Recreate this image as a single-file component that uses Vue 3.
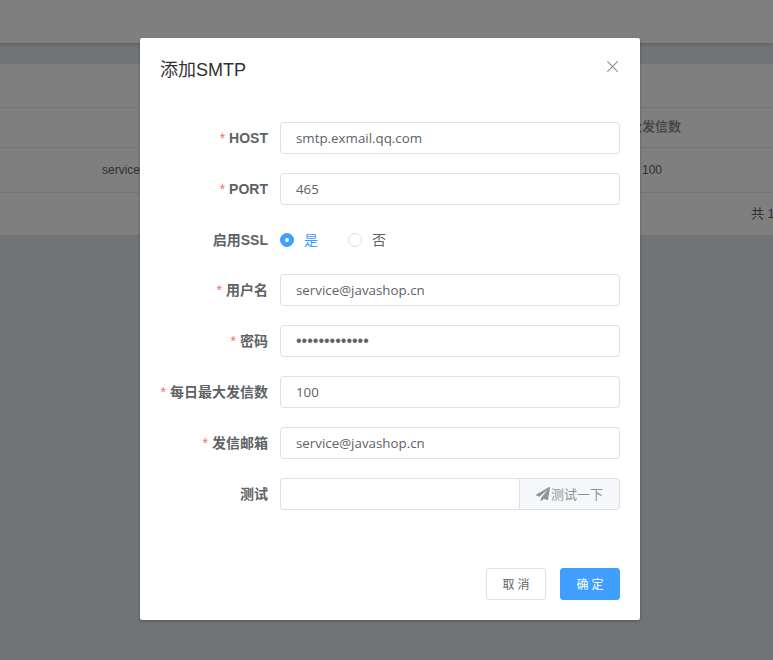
<script setup>
const fields = [
  { label: 'HOST', value: 'smtp.exmail.qq.com' },
  { label: 'PORT', value: '465' },
]
const fields2 = [
  { label: '用户名', value: 'service@javashop.cn', type: 'text' },
  { label: '密码', value: 'service123456', type: 'password' },
  { label: '每日最大发信数', value: '100', type: 'text' },
  { label: '发信邮箱', value: 'service@javashop.cn', type: 'text' },
]
</script>

<template>
  <div class="page">
    <header class="topbar"></header>
    <div class="band"></div>
    <section class="table">
      <div class="row blank"></div>
      <div class="row head">
        <div class="cell-left"></div>
        <div class="cell-right">每日最大发信数</div>
      </div>
      <div class="row data">
        <div class="cell-left">service@javashop.cn</div>
        <div class="cell-right num">100</div>
      </div>
      <div class="pager"><span>共 1 条</span></div>
    </section>

    <div class="overlay">
      <div class="dialog">
        <div class="dialog-head">
          <span class="title">添加SMTP</span>
          <svg class="close" viewBox="0 0 11 11" width="11" height="11">
            <path d="M.3.3l10.4 10.4M10.7.3L.3 10.7" stroke="#909399" stroke-width="1.2" fill="none" />
          </svg>
        </div>
        <form class="form" @submit.prevent>
          <div v-for="f in fields" :key="f.label" class="item">
            <label class="label"><i>*</i>{{ f.label }}</label>
            <input class="input" :value="f.value" />
          </div>
          <div class="item radio-item">
            <label class="label cjk">启用SSL</label>
            <div class="radios">
              <span class="radio on"><b class="dot"></b><span class="cjk">是</span></span>
              <span class="radio"><b class="dot"></b><span class="cjk">否</span></span>
            </div>
          </div>
          <div v-for="f in fields2" :key="f.label" class="item">
            <label class="label cjk"><i>*</i>{{ f.label }}</label>
            <input class="input" :class="{ secret: f.type === 'password' }" :type="f.type" :value="f.value" />
          </div>
          <div class="item">
            <label class="label cjk">测试</label>
            <div class="group">
              <input class="input joined" />
              <div class="append">
                <svg viewBox="0 0 512 512" width="14" height="14">
                  <path fill="#909399" d="M476 3.2 12.5 270.6c-18.1 10.4-15.8 35.6 2.2 43.2L121 358.4l287.3-253.2c5.5-4.9 13.3 2.6 8.6 8.3L176 407v80.5c0 23.6 28.5 32.9 42.5 15.8L282 426l124.6 52.2c14.2 6 30.4-2.9 33-18.2l72-432C515 7.8 493.3-6.8 476 3.2z" />
                </svg>
                <span class="cjk">测试一下</span>
              </div>
            </div>
          </div>
        </form>
        <div class="dialog-foot">
          <button class="btn" type="button">取 消</button>
          <button class="btn primary" type="button">确 定</button>
        </div>
      </div>
    </div>
  </div>
</template>

<style>
html, body { margin: 0; padding: 0; }
</style>

<style scoped>
.page {
  position: relative;
  width: 773px;
  height: 660px;
  overflow: hidden;
  background: #e2e8ed;
  font-family: "Liberation Sans", "Noto Sans CJK SC", sans-serif;
  font-size: 14px;
  color: #606266;
}
.topbar {
  height: 43px;
  background: #fff;
  box-shadow: 0 1px 4px rgba(0, 0, 0, .2);
  position: relative;
}
.band { height: 21px; }
.table {
  background: #fff;
  height: 171px;
  font-size: 12px;
}
.row {
  display: flex;
  align-items: center;
  box-sizing: border-box;
  border-bottom: 1px solid #ebeef5;
}
.blank { height: 44px; }
.head { height: 40px; padding-bottom: 4px; font-weight: 700; font-size: 13px; color: #909399; }
.data { height: 45px; color: #606266; }
.cell-left { width: 590px; padding-left: 102px; box-sizing: border-box; white-space: nowrap; }
.cell-right { white-space: nowrap; }
.num { margin-left: 52px; }
.pager {
  display: flex;
  align-items: center;
  height: 42px;
  padding-left: 751px;
  padding-bottom: 4px;
  box-sizing: border-box;
  white-space: nowrap;
  font-size: 13px;
  color: #606266;
}
.overlay {
  position: absolute;
  inset: 0;
  background: rgba(0, 0, 0, .5);
}
.dialog {
  width: 500px;
  height: 582px;
  margin: 38px 0 0 140px;
  background: #fff;
  border-radius: 2px;
  box-shadow: 0 1px 3px rgba(0, 0, 0, .3);
  box-sizing: border-box;
  display: flex;
  flex-direction: column;
}
.dialog-head {
  display: flex;
  justify-content: space-between;
  padding: 20px 22px 10px 20px;
  height: 54px;
  box-sizing: border-box;
}
.title { font-size: 18px; line-height: 24px; color: #303133; }
.close { margin-top: 3px; }
.form { padding: 30px 20px 0; flex: 1; }
.item { display: flex; height: 32px; margin-bottom: 19px; align-items: center; }
.radio-item { height: 31px; }
.label {
  width: 120px;
  box-sizing: border-box;
  padding-right: 12px;
  text-align: right;
  font-weight: 700;
  font-size: 14px;
  color: #606266;
  white-space: nowrap;
}
.label.cjk, span.cjk { padding-bottom: 2px; }
.label i { color: #f56c6c; font-style: normal; font-weight: 400; margin-right: 4px; }
.input {
  flex: 1;
  min-width: 0;
  height: 32px;
  box-sizing: border-box;
  border: 1px solid #dcdfe6;
  border-radius: 4px;
  padding: 0 15px;
  font-family: "Open Sans", sans-serif;
  font-size: 13.33px;
  color: #606266;
  outline: none;
  background: #fff;
}
.secret { font-family: "Liberation Sans", sans-serif; font-size: 16px; }
.radios { display: flex; }
.radio { display: flex; align-items: center; width: 68px; color: #606266; }
.radio .dot {
  width: 14px;
  height: 14px;
  margin-right: 10px;
  border: 1px solid #dcdfe6;
  border-radius: 50%;
  box-sizing: border-box;
  background: #fff;
}
.radio.on { color: #409eff; }
.radio.on .dot { background: #409eff; border-color: #409eff; position: relative; }
.radio.on .dot::after {
  content: "";
  position: absolute;
  left: 4px;
  top: 4px;
  width: 4px;
  height: 4px;
  border-radius: 50%;
  background: #fff;
}
.group { display: flex; flex: 1; }
.joined { border-radius: 4px 0 0 4px; border-right: 0; }
.append {
  width: 101px;
  height: 32px;
  box-sizing: border-box;
  display: flex;
  align-items: center;
  justify-content: center;
  gap: 1px;
  background: #f5f7fa;
  border: 1px solid #dcdfe6;
  border-radius: 0 4px 4px 0;
  color: #909399;
  font-size: 13px;
}
.dialog-foot {
  display: flex;
  justify-content: flex-end;
  gap: 14px;
  padding: 0 20px 20px;
}
.btn {
  width: 60px;
  height: 32px;
  box-sizing: border-box;
  border: 1px solid #dcdfe6;
  border-radius: 3px;
  background: #fff;
  color: #606266;
  font-family: "Open Sans", "Noto Sans CJK SC", sans-serif;
  font-size: 12px;
  padding: 0;
}
.primary { background: #409eff; border-color: #409eff; color: #fff; }
</style>
